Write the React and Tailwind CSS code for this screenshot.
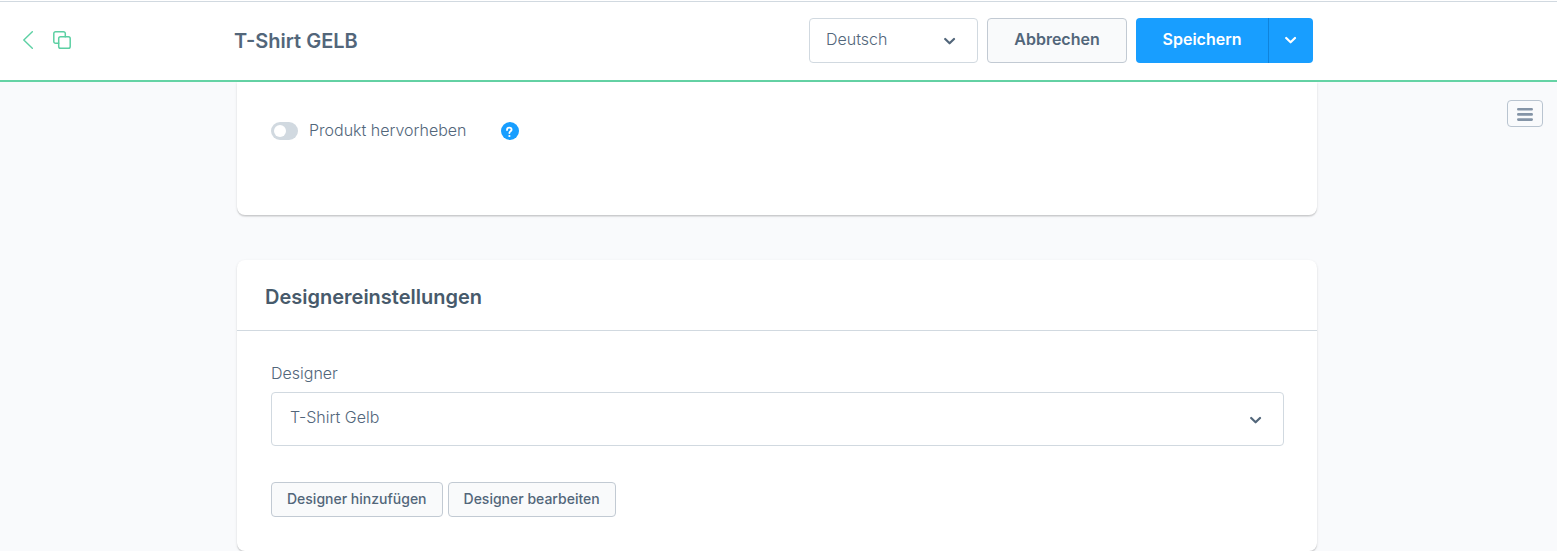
import { useState } from 'react';
import clsx from 'clsx';

const ChevronDown = ({ className }) => (
  <svg className={clsx('w-3 h-2', className)} viewBox="0 0 12 8" fill="none" stroke="currentColor">
    <path strokeLinecap="round" strokeLinejoin="round" strokeWidth={2.2} d="M1.2 2L5.6 6.3L10 2" />
  </svg>
);

const Card = ({ className, children }) => (
  <section
    className={clsx(
      'bg-white shadow-[0_1px_1px_rgba(0,0,0,0.08),0_2px_1px_rgba(0,0,0,0.06),0_1px_3px_rgba(0,0,0,0.1)]',
      className
    )}
  >
    {children}
  </section>
);

const SmallButton = ({ children }) => (
  <button
    type="button"
    className="h-[35px] px-[15px] pb-[2px] rounded border border-[#c2cad3] bg-[#f9fafb] text-sm font-medium text-[#52667a]"
  >
    {children}
  </button>
);

const PageHeader = () => {
  const [language, setLanguage] = useState('de');

  return (
    <header className="grid grid-cols-[1fr_minmax(0,1080px)_1fr] items-center h-[82px] pr-[11px] bg-white border-b-2 border-b-[#65d3a5] shadow-[inset_0_1px_0_#fff,inset_0_2px_0_#d1d9e0]">
      <div className="flex items-center gap-5 pl-[23px]">
        <a href="#produkte" aria-label="Zurück" className="text-[#5cd0a3]">
          <svg className="w-[10px] h-[18px]" viewBox="0 0 10 18" fill="none" stroke="currentColor">
            <path strokeLinecap="round" strokeLinejoin="round" strokeWidth={1.4} d="M9.3 0.7L0.8 9L9.3 17.3" />
          </svg>
        </a>
        <a href="#duplizieren" aria-label="Duplizieren" className="text-[#5cd0a3]">
          <svg className="w-[18px] h-[18px]" viewBox="0 0 18 18" fill="none" stroke="currentColor" strokeWidth={1.5}>
            <rect x="5.7" y="5.7" width="11.5" height="11.5" rx="1.8" />
            <path
              strokeLinecap="round"
              d="M5.7 12.3H2.6A1.8 1.8 0 0 1 0.8 10.5V2.6A1.8 1.8 0 0 1 2.6 0.8H10.5A1.8 1.8 0 0 1 12.3 2.6V5.7"
            />
          </svg>
        </a>
      </div>

      <div className="flex items-center justify-between">
        <h1 className="pt-[2px] pl-px text-xl font-semibold text-[#52667a]">T-Shirt GELB</h1>
        <div className="flex items-center gap-[9px]">
          <div className="relative">
            <select
              aria-label="Sprache"
              value={language}
              onChange={(e) => setLanguage(e.target.value)}
              className="block appearance-none w-[169px] h-[45px] pl-4 pr-10 pb-[2px] rounded border border-[#d1d9e0] bg-white text-base font-light text-[#52667a]"
            >
              <option value="de">Deutsch</option>
              <option value="en">English</option>
            </select>
            <ChevronDown className="absolute right-[22px] top-[19px] text-[#52667a] pointer-events-none" />
          </div>
          <button
            type="button"
            className="w-[140px] h-[45px] pb-[2px] rounded border border-[#c2cad3] bg-[#f9fafb] text-base font-semibold text-[#52667a]"
          >
            Abbrechen
          </button>
          <div className="flex h-[45px] rounded overflow-hidden bg-[#189eff] text-white">
            <button type="button" className="w-[132px] pb-[2px] text-base font-semibold">
              Speichern
            </button>
            <button
              type="button"
              aria-label="Weitere Optionen"
              className="flex items-center justify-center w-[45px] border-l border-[#0f83db]"
            >
              <ChevronDown />
            </button>
          </div>
        </div>
      </div>
    </header>
  );
};

const App = () => {
  const [highlighted, setHighlighted] = useState(false);
  const [designer, setDesigner] = useState('gelb');

  return (
    <div className="min-h-screen bg-[#f9fafc] font-[Inter,sans-serif]">
      <PageHeader />

      <main className="grid grid-cols-[1fr_minmax(0,1080px)_1fr] pr-[3px]">
        <div className="col-start-2">
          <Card className="rounded-b-lg pt-[37px] px-[34px] pb-[72px]">
            <div className="flex items-center h-6">
              <input
                id="highlight"
                type="checkbox"
                checked={highlighted}
                onChange={(e) => setHighlighted(e.target.checked)}
                className="appearance-none flex items-center w-[27px] h-[18px] px-[3px] rounded-full bg-[#d1d9e0] checked:bg-[#189eff] checked:justify-end before:block before:w-3 before:h-3 before:rounded-full before:bg-white"
              />
              <label htmlFor="highlight" className="ml-[11px] pb-[2px] text-base font-light text-[#52667a]">
                Produkt hervorheben
              </label>
              <button
                type="button"
                aria-label="Hilfe"
                className="flex items-center justify-center w-[18px] h-[18px] ml-[34px] rounded-full bg-[#189eff] text-white"
              >
                <svg className="w-[18px] h-[18px]" viewBox="0 0 18 18" fill="none" stroke="currentColor">
                  <path
                    strokeLinecap="round"
                    strokeLinejoin="round"
                    strokeWidth={1.8}
                    d="M6 8C6 6.5 7 5.7 8.3 5.7C9.6 5.7 10.6 6.5 10.6 7.8C10.6 9.3 8.4 9.4 8.4 11.1"
                  />
                  <circle cx="8.4" cy="14" r="1.1" fill="currentColor" stroke="none" />
                </svg>
              </button>
            </div>
          </Card>

          <Card className="mt-[45px] rounded-lg">
            <div className="pt-[25px] pb-[21px] px-7 border-b border-[#d1d9e0]">
              <h2 className="text-xl leading-6 font-semibold text-[#475a6b]">Designereinstellungen</h2>
            </div>
            <div className="pt-[30px] pl-[34px] pr-[33px] pb-[34px]">
              <label htmlFor="designer" className="block text-base font-light text-[#52667a]">
                Designer
              </label>
              <div className="relative mt-[7px]">
                <select
                  id="designer"
                  value={designer}
                  onChange={(e) => setDesigner(e.target.value)}
                  className="block appearance-none w-full h-[54px] pl-[18px] pr-12 pb-1 rounded border border-[#d1d9e0] bg-white text-base font-light text-[#52667a]"
                >
                  <option value="gelb">T-Shirt Gelb</option>
                </select>
                <ChevronDown className="absolute right-[22px] top-6 text-[#52667a] pointer-events-none" />
              </div>
              <div className="flex gap-[5px] mt-9">
                <SmallButton>Designer hinzufügen</SmallButton>
                <SmallButton>Designer bearbeiten</SmallButton>
              </div>
            </div>
          </Card>
        </div>

        <div className="flex items-start justify-end pt-[18px] pr-[11px]">
          <button
            type="button"
            aria-label="Seitenleiste"
            className="flex items-center justify-center w-9 h-[27px] rounded border border-[#b9c4d0] bg-[#f9fafc] text-[#8494a7]"
          >
            <svg className="w-4 h-[14px]" viewBox="0 0 16 14" fill="none" stroke="currentColor">
              <path strokeLinecap="round" strokeWidth={2.6} d="M1.3 2.2H14.7M1.3 7.4H14.7M1.3 12.6H14.7" />
            </svg>
          </button>
        </div>
      </main>
    </div>
  );
};

export default App;
